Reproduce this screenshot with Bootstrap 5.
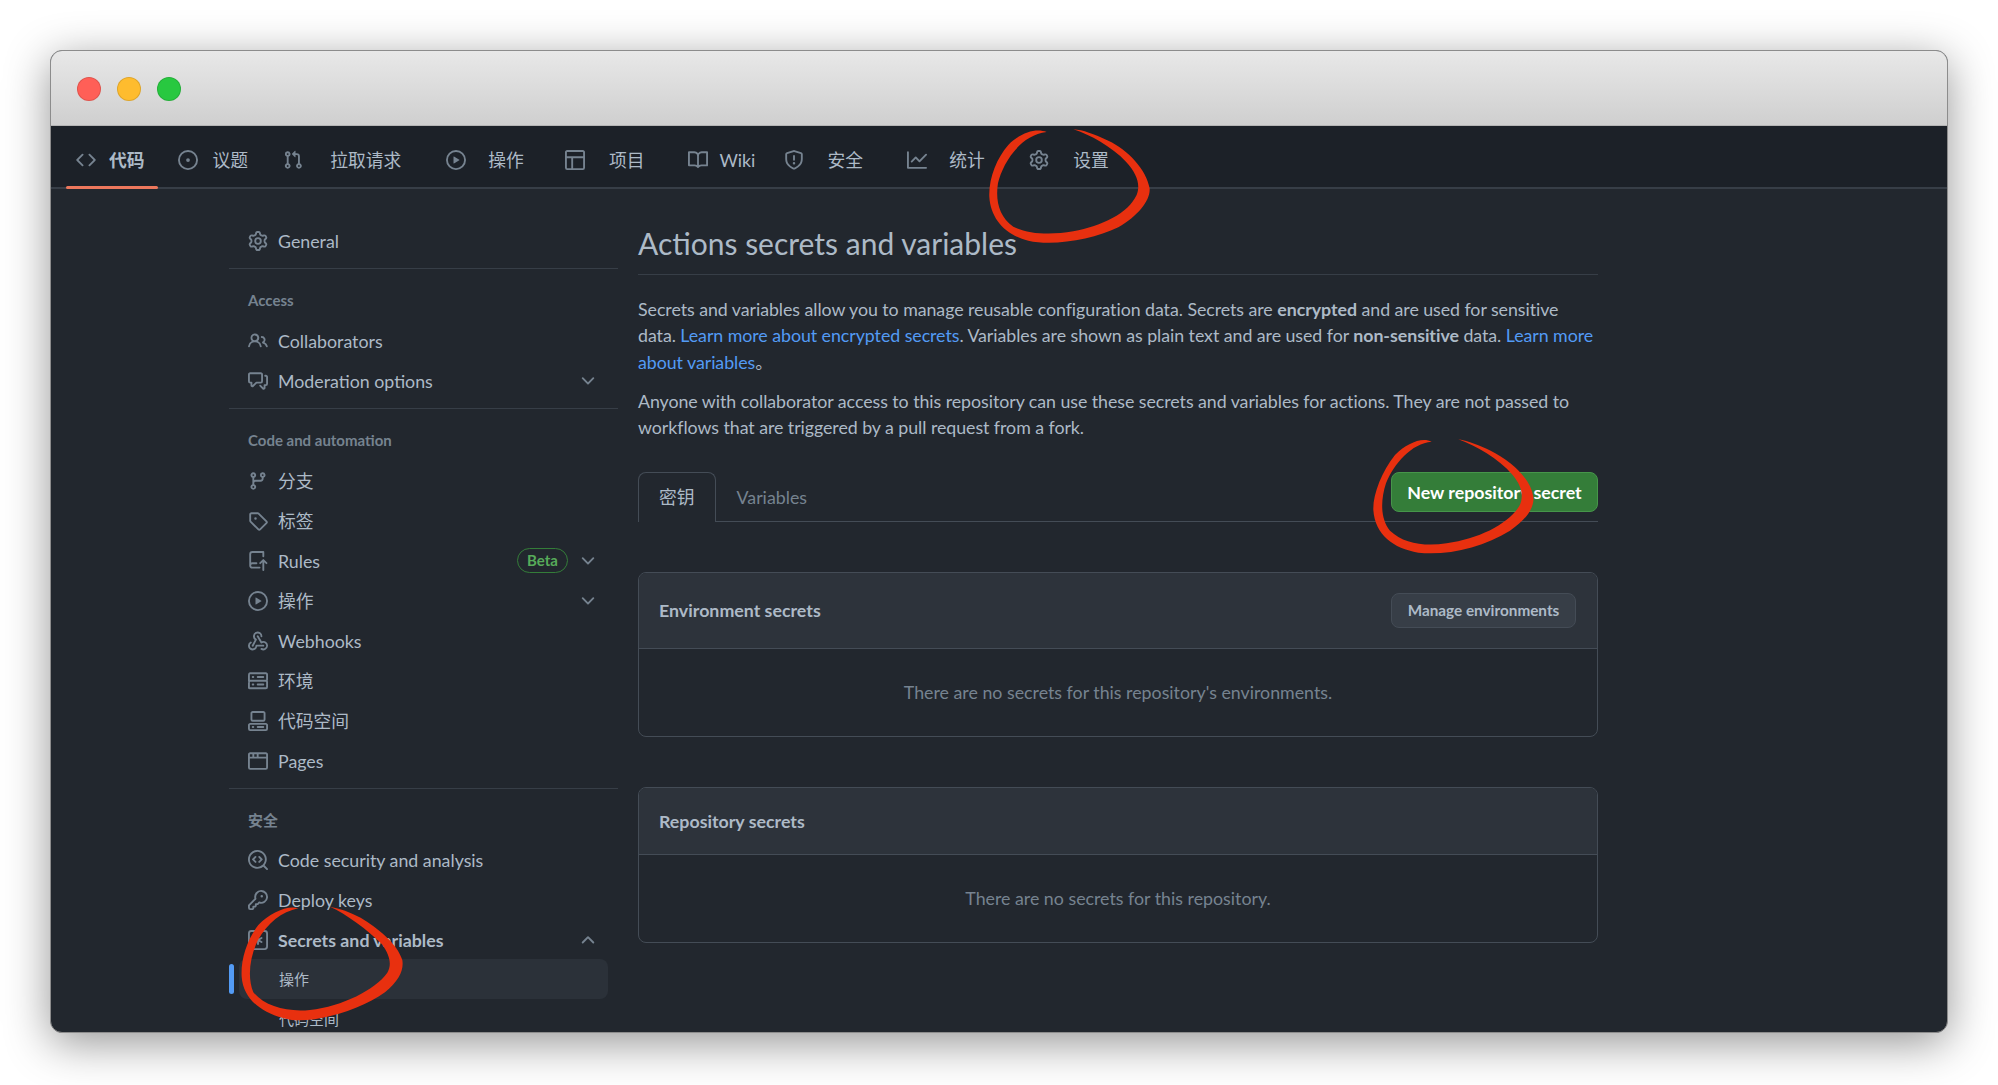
<!DOCTYPE html>
<html lang="en">

<head>
    <meta charset="UTF-8">
    <title>Actions secrets and variables</title>
    <link href="https://cdn.jsdelivr.net/npm/bootstrap@5.3.3/dist/css/bootstrap.min.css" rel="stylesheet">
    <style>
        html, body {
            height: 100%;
            overflow: hidden;
        }

        body {
            background-color: #fff;
            color: #adbac7;
            font-family: Lato, "Noto Sans CJK SC", sans-serif;
            font-size: 17.8px;
            line-height: 26.5px;
        }

        .page-wrap {
            position: relative;
            width: 1998px;
            height: 1085px;
            padding: 50px 50px 52px;
        }

        .app-window {
            height: 983px;
            background-color: #22272e;
            border: 1px solid #8c8c8c;
            border-radius: 12px;
            box-shadow: 0 10px 45px rgba(0, 0, 0, .42);
            overflow: hidden;
        }

        .title-bar {
            height: 76px;
            padding-left: 26px;
            padding-top: 2px;
            background: linear-gradient(#e8e8e8, #cfcfcf);
            border-bottom: 1px solid #b5b5b5;
        }

        .light-dot {
            width: 24px;
            height: 24px;
            border: 1px solid rgba(0, 0, 0, .12);
        }

        .light-red { background-color: #ff5f57; }
        .light-yellow { background-color: #febc2e; }
        .light-green { background-color: #28c840; }

        .octicon {
            width: 20px;
            height: 20px;
            flex: none;
            fill: #768390;
        }

        .repo-tabs {
            height: 63px;
            padding-left: 25px;
            background-color: #1c2128;
            border-bottom: 2px solid #373e47;
            flex-wrap: nowrap;
        }

        .repo-tabs .nav-link {
            position: relative;
            display: flex;
            align-items: center;
            padding: 7.5px 0 0;
            color: #adbac7;
            white-space: nowrap;
        }

        .repo-tabs .nav-link.active {
            font-weight: 700;
        }

        .repo-tabs .nav-link.active::after {
            content: "";
            position: absolute;
            left: -10px;
            right: -13px;
            bottom: -2px;
            height: 3px;
            background-color: #ec775c;
            border-radius: 2px;
        }

        /* the translated labels leave uneven gaps, so each tab keeps its own */
        .repo-tabs .nav-link:nth-child(1) { margin-right: 33px; }
        .repo-tabs .nav-link:nth-child(2) { margin-right: 35px; }
        .repo-tabs .nav-link:nth-child(3) { margin-right: 44.5px; }
        .repo-tabs .nav-link:nth-child(4) { margin-right: 41px; }
        .repo-tabs .nav-link:nth-child(5) { margin-right: 44px; }
        .repo-tabs .nav-link:nth-child(6) { margin-right: 28.7px; }
        .repo-tabs .nav-link:nth-child(7) { margin-right: 44.3px; }
        .repo-tabs .nav-link:nth-child(8) { margin-right: 44.3px; }
        .repo-tabs .nav-link:nth-child(1) svg { margin-right: 13px; }
        .repo-tabs .nav-link:nth-child(2) svg { margin-right: 15px; }
        .repo-tabs .nav-link:nth-child(3) svg { margin-right: 27px; }
        .repo-tabs .nav-link:nth-child(4) svg { margin-right: 22.5px; }
        .repo-tabs .nav-link:nth-child(5) svg { margin-right: 24px; }
        .repo-tabs .nav-link:nth-child(6) svg { margin-right: 11px; }
        .repo-tabs .nav-link:nth-child(7) svg { margin-right: 23.5px; }
        .repo-tabs .nav-link:nth-child(8) svg { margin-right: 21.7px; }
        .repo-tabs .nav-link:nth-child(9) svg { margin-right: 24.2px; }

        .content-area {
            padding-left: 178px;
            gap: 20px;
        }

        .side-menu {
            width: 389px;
            padding-top: 32px;
            flex: none;
        }

        .side-row {
            display: flex;
            align-items: center;
            gap: 10px;
            height: 40px;
            padding: 0 20px 0 19px;
            color: #adbac7;
        }

        .side-row .chev {
            margin-left: auto;
        }

        .side-row .beta-pill + .chev {
            margin-left: 0;
        }

        .side-group {
            padding-bottom: 7.5px;
            border-bottom: 1px solid #373e47;
        }

        .side-head {
            padding: 21px 19px 10.5px;
            font-size: 15px;
            line-height: 20px;
            font-weight: 700;
            color: #768390;
        }

        .side-head.last-head {
            padding-bottom: 10px;
        }

        .beta-pill {
            margin-left: auto;
            width: 51px;
            height: 25px;
            line-height: 23px;
            text-align: center;
            font-size: 15px;
            font-weight: 700;
            color: #57ab5a;
            border: 1px solid #347d39;
        }

        .side-sub {
            position: relative;
            display: flex;
            align-items: center;
            height: 40px;
            margin: 0 10px;
            padding-left: 40px;
            font-size: 15px;
            border-radius: 8px;
        }

        .side-sub.current {
            margin-top: -1px;
            background-color: #2b3139;
        }

        .side-sub.current::before {
            content: "";
            position: absolute;
            left: -10px;
            top: 5px;
            width: 5px;
            height: 30px;
            background-color: #539bf5;
            border-radius: 3px;
        }

        .main-col {
            width: 960px;
            padding-top: 35px;
            flex: none;
        }

        .page-title {
            height: 51px;
            margin-bottom: 21px;
            font-size: 30px;
            line-height: 38px;
            font-weight: 400;
            color: #adbac7;
            border-bottom: 1px solid #373e47;
        }

        .main-col p {
            margin-bottom: 12.5px;
            letter-spacing: -.05px;
        }

        .main-col a {
            color: #539bf5;
            text-decoration: none;
        }

        .main-col strong {
            font-weight: 700;
        }

        .secret-tabs {
            height: 50px;
            margin-top: 31px;
            margin-bottom: 50px;
            border-bottom: 1px solid #444c56;
        }

        .secret-tabs .nav-tabs {
            border: 0;
        }

        .secret-tabs .nav-link {
            height: 50px;
            padding: 11px 20px;
            color: #768390;
            background: transparent;
            border: 1px solid transparent;
            border-bottom: 0;
            border-radius: 8px 8px 0 0;
        }

        .secret-tabs .nav-link.active {
            color: #adbac7;
            background-color: #22272e;
            border-color: #444c56;
        }

        .btn-new-secret {
            width: 207px;
            height: 40px;
            padding: 0;
            font-size: 17.8px;
            font-weight: 700;
            color: #fff;
            background-color: #347d39;
            border: 1px solid #46954a;
            border-radius: 8px;
        }

        .empty-box {
            --bs-card-bg: #22272e;
            --bs-card-border-color: #444c56;
            --bs-card-border-radius: 8px;
            --bs-card-inner-border-radius: 7px;
            --bs-card-cap-bg: #2d333b;
            color: #adbac7;
            margin-bottom: 50px;
        }

        .empty-box .card-header {
            padding: 0 21px 0 20px;
            font-weight: 700;
            border-bottom-color: #444c56;
        }

        .empty-box .head-tall { height: 76px; }
        .empty-box .head-short { height: 67px; }

        .empty-box .card-body {
            height: 87px;
            padding: 0;
            color: #768390;
        }

        .btn-manage {
            width: 185px;
            height: 35px;
            padding: 0;
            font-size: 15.3px;
            font-weight: 700;
            color: #adbac7;
            background-color: #373e47;
            border: 1px solid #444c56;
            border-radius: 8px;
        }

        .ink-layer {
            position: absolute;
            left: 0;
            top: 0;
            width: 1998px;
            height: 1085px;
            pointer-events: none;
        }
    </style>
</head>

<body>
    <svg width="0" height="0" class="position-absolute">
        <symbol id="i-code" viewBox="0 0 16 16"><path d="m11.28 3.22 4.25 4.25a.75.75 0 0 1 0 1.06l-4.25 4.25a.749.749 0 0 1-1.275-.326.749.749 0 0 1 .215-.734L13.94 8l-3.72-3.72a.749.749 0 0 1 .326-1.275.749.749 0 0 1 .734.215Zm-6.56 0a.751.751 0 0 1 1.042.018.751.751 0 0 1 .018 1.042L2.06 8l3.72 3.72a.749.749 0 0 1-.326 1.275.749.749 0 0 1-.734-.215L.47 8.53a.75.75 0 0 1 0-1.06Z"/></symbol>
        <symbol id="i-issue" viewBox="0 0 16 16"><path d="M8 9.5a1.5 1.5 0 1 0 0-3 1.5 1.5 0 0 0 0 3Z"/><path d="M8 0a8 8 0 1 1 0 16A8 8 0 0 1 8 0ZM1.5 8a6.5 6.5 0 1 0 13 0 6.5 6.5 0 0 0-13 0Z"/></symbol>
        <symbol id="i-pull" viewBox="0 0 16 16"><path d="M1.5 3.25a2.25 2.25 0 1 1 3 2.122v5.256a2.251 2.251 0 1 1-1.5 0V5.372A2.25 2.25 0 0 1 1.5 3.25Zm5.677-.177L9.573.677A.25.25 0 0 1 10 .854V2.5h1A2.5 2.5 0 0 1 13.5 5v5.628a2.251 2.251 0 1 1-1.5 0V5a1 1 0 0 0-1-1h-1v1.646a.25.25 0 0 1-.427.177L7.177 3.427a.25.25 0 0 1 0-.354ZM3.75 2.5a.75.75 0 1 0 0 1.5.75.75 0 0 0 0-1.5Zm0 9.5a.75.75 0 1 0 0 1.5.75.75 0 0 0 0-1.5Zm8.25.75a.75.75 0 1 0 1.5 0 .75.75 0 0 0-1.5 0Z"/></symbol>
        <symbol id="i-play" viewBox="0 0 16 16"><path d="M8 0a8 8 0 1 1 0 16A8 8 0 0 1 8 0ZM1.5 8a6.5 6.5 0 1 0 13 0 6.5 6.5 0 0 0-13 0Zm4.879-2.773 4.264 2.559a.25.25 0 0 1 0 .428l-4.264 2.559A.25.25 0 0 1 6 10.559V5.442a.25.25 0 0 1 .379-.215Z"/></symbol>
        <symbol id="i-table" viewBox="0 0 16 16"><path d="M0 1.75C0 .784.784 0 1.75 0h12.5C15.216 0 16 .784 16 1.75v12.5A1.75 1.75 0 0 1 14.25 16H1.75A1.75 1.75 0 0 1 0 14.25ZM6.5 6.5v8h7.75a.25.25 0 0 0 .25-.25V6.5Zm8-1.5V1.75a.25.25 0 0 0-.25-.25H1.75a.25.25 0 0 0-.25.25V5Zm-13 1.5v7.75c0 .138.112.25.25.25H5v-8Z"/></symbol>
        <symbol id="i-book" viewBox="0 0 16 16"><path d="M0 1.75A.75.75 0 0 1 .75 1h4.253c1.227 0 2.317.59 3 1.501A3.743 3.743 0 0 1 11.006 1h4.245a.75.75 0 0 1 .75.75v10.5a.75.75 0 0 1-.75.75h-4.507a2.25 2.25 0 0 0-1.591.659l-.622.621a.75.75 0 0 1-1.06 0l-.622-.621A2.25 2.25 0 0 0 5.258 13H.75a.75.75 0 0 1-.75-.75Zm7.251 10.324.004-5.073-.002-2.253A2.25 2.25 0 0 0 5.003 2.5H1.5v9h3.757a3.75 3.75 0 0 1 1.994.574ZM8.755 4.75l-.004 7.322a3.752 3.752 0 0 1 1.992-.572H14.5v-9h-3.495a2.25 2.25 0 0 0-2.25 2.25Z"/></symbol>
        <symbol id="i-shield" viewBox="0 0 16 16"><path d="M7.467.133a1.748 1.748 0 0 1 1.066 0l5.25 1.68A1.75 1.75 0 0 1 15 3.48V7c0 1.566-.32 3.182-1.303 4.682-.983 1.498-2.585 2.813-5.032 3.855a1.697 1.697 0 0 1-1.33 0c-2.447-1.042-4.049-2.357-5.032-3.855C1.32 10.182 1 8.566 1 7V3.48a1.75 1.75 0 0 1 1.217-1.667Zm.61 1.429a.25.25 0 0 0-.153 0l-5.25 1.68a.25.25 0 0 0-.174.238V7c0 1.358.275 2.666 1.057 3.86.784 1.194 2.121 2.34 4.366 3.297a.196.196 0 0 0 .154 0c2.245-.956 3.582-2.104 4.366-3.298C13.225 9.666 13.5 8.36 13.5 7V3.48a.251.251 0 0 0-.174-.237l-5.25-1.68ZM8.75 4.75v3a.75.75 0 0 1-1.5 0v-3a.75.75 0 0 1 1.5 0ZM9 10.5a1 1 0 1 1-2 0 1 1 0 0 1 2 0Z"/></symbol>
        <symbol id="i-graph" viewBox="0 0 16 16"><path d="M1.5 1.75V13.5h13.75a.75.75 0 0 1 0 1.5H.75a.75.75 0 0 1-.75-.75V1.75a.75.75 0 0 1 1.5 0Zm14.28 2.53-5.25 5.25a.75.75 0 0 1-1.06 0L7 7.06 4.28 9.78a.751.751 0 0 1-1.042-.018.751.751 0 0 1-.018-1.042l3.25-3.25a.75.75 0 0 1 1.06 0L10 7.94l4.72-4.72a.751.751 0 0 1 1.042.018.751.751 0 0 1 .018 1.042Z"/></symbol>
        <symbol id="i-gear" viewBox="0 0 16 16"><path d="M8 0a8.2 8.2 0 0 1 .701.031C9.444.095 9.99.645 10.16 1.29l.288 1.107c.018.066.079.158.212.224.231.114.454.243.668.386.123.082.233.09.299.071l1.103-.303c.644-.176 1.392.021 1.82.63.27.385.506.792.704 1.218.315.675.111 1.422-.364 1.891l-.814.806c-.049.048-.098.147-.088.294.016.257.016.515 0 .772-.01.147.038.246.088.294l.814.806c.475.469.679 1.216.364 1.891a7.977 7.977 0 0 1-.704 1.217c-.428.61-1.176.807-1.82.63l-1.102-.302c-.067-.019-.177-.011-.3.071a5.909 5.909 0 0 1-.668.386c-.133.066-.194.158-.211.224l-.29 1.106c-.168.646-.715 1.196-1.458 1.26a8.006 8.006 0 0 1-1.402 0c-.743-.064-1.289-.614-1.458-1.26l-.289-1.106c-.018-.066-.079-.158-.212-.224a5.738 5.738 0 0 1-.668-.386c-.123-.082-.233-.09-.299-.071l-1.103.303c-.644.176-1.392-.021-1.82-.63a8.12 8.12 0 0 1-.704-1.218c-.315-.675-.111-1.422.363-1.891l.815-.806c.05-.048.098-.147.088-.294a6.214 6.214 0 0 1 0-.772c.01-.147-.038-.246-.088-.294l-.815-.806C.635 6.045.431 5.298.746 4.623a7.92 7.92 0 0 1 .704-1.217c.428-.61 1.176-.807 1.82-.63l1.102.302c.067.019.177.011.3-.071.214-.143.437-.272.668-.386.133-.066.194-.158.211-.224l.29-1.106C6.009.645 6.556.095 7.299.03 7.53.01 7.764 0 8 0Zm-.571 1.525c-.036.003-.108.036-.137.146l-.289 1.105c-.147.561-.549.967-.998 1.189-.173.086-.34.183-.5.29-.417.278-.97.423-1.529.27l-1.103-.303c-.109-.03-.175.016-.195.045-.22.312-.412.644-.573.99-.014.031-.021.11.059.19l.815.806c.411.406.562.957.53 1.456a4.709 4.709 0 0 0 0 .582c.032.499-.119 1.05-.53 1.456l-.815.806c-.081.08-.073.159-.059.19.162.346.353.677.573.989.02.03.085.076.195.046l1.102-.303c.56-.153 1.113-.008 1.53.27.161.107.328.204.501.29.447.222.85.629.997 1.189l.289 1.105c.029.109.101.143.137.146a6.6 6.6 0 0 0 1.142 0c.036-.003.108-.036.137-.146l.289-1.105c.147-.561.549-.967.998-1.189.173-.086.34-.183.5-.29.417-.278.97-.423 1.529-.27l1.103.303c.109.029.175-.016.195-.045.22-.313.411-.644.573-.99.014-.031.021-.11-.059-.19l-.815-.806c-.411-.406-.562-.957-.53-1.456a4.709 4.709 0 0 0 0-.582c-.032-.499.119-1.05.53-1.456l.815-.806c.081-.08.073-.159.059-.19a6.464 6.464 0 0 0-.573-.989c-.02-.03-.085-.076-.195-.046l-1.102.303c-.56.153-1.113.008-1.53-.27a4.44 4.44 0 0 0-.501-.29c-.447-.222-.85-.629-.997-1.189l-.289-1.105c-.029-.11-.101-.143-.137-.146a6.6 6.6 0 0 0-1.142 0ZM11 8a3 3 0 1 1-6 0 3 3 0 0 1 6 0ZM9.5 8a1.5 1.5 0 1 0-3.001.001A1.5 1.5 0 0 0 9.5 8Z"/></symbol>
        <symbol id="i-people" viewBox="0 0 16 16"><path d="M2 5.5a3.5 3.5 0 1 1 5.898 2.549 5.508 5.508 0 0 1 3.034 4.084.75.75 0 1 1-1.482.235 4 4 0 0 0-7.9 0 .75.75 0 0 1-1.482-.236A5.507 5.507 0 0 1 3.102 8.05 3.493 3.493 0 0 1 2 5.5ZM11 4a3.001 3.001 0 0 1 2.22 5.018 5.01 5.01 0 0 1 2.56 3.012.749.749 0 0 1-.885.954.752.752 0 0 1-.549-.514 3.507 3.507 0 0 0-2.522-2.372.75.75 0 0 1-.574-.73v-.352a.75.75 0 0 1 .416-.672A1.5 1.5 0 0 0 11 5.5.75.75 0 0 1 11 4Zm-5.5-.5a2 2 0 1 0-.001 3.999A2 2 0 0 0 5.5 3.5Z"/></symbol>
        <symbol id="i-discuss" viewBox="0 0 16 16"><path d="M1.75 1h8.5c.966 0 1.75.784 1.75 1.75v5.5A1.75 1.75 0 0 1 10.25 10H7.061l-2.574 2.573A1.458 1.458 0 0 1 2 11.543V10h-.25A1.75 1.75 0 0 1 0 8.25v-5.5C0 1.784.784 1 1.75 1ZM1.5 2.75v5.5c0 .138.112.25.25.25h1a.75.75 0 0 1 .75.75v2.19l2.72-2.72a.749.749 0 0 1 .53-.22h3.5a.25.25 0 0 0 .25-.25v-5.5a.25.25 0 0 0-.25-.25h-8.5a.25.25 0 0 0-.25.25Zm13 2a.25.25 0 0 0-.25-.25h-.5a.75.75 0 0 1 0-1.5h.5c.966 0 1.75.784 1.75 1.75v5.5A1.75 1.75 0 0 1 14.25 12H14v1.543a1.458 1.458 0 0 1-2.487 1.03L9.22 12.28a.749.749 0 0 1 .326-1.275.749.749 0 0 1 .734.215l2.22 2.22v-2.19a.75.75 0 0 1 .75-.75h1a.25.25 0 0 0 .25-.25Z"/></symbol>
        <symbol id="i-branch" viewBox="0 0 16 16"><path d="M9.5 3.25a2.25 2.25 0 1 1 3 2.122V6A2.5 2.5 0 0 1 10 8.5H6a1 1 0 0 0-1 1v1.128a2.251 2.251 0 1 1-1.5 0V5.372a2.25 2.25 0 1 1 1.5 0v1.836A2.493 2.493 0 0 1 6 7h4a1 1 0 0 0 1-1v-.628A2.25 2.25 0 0 1 9.5 3.25Zm-6 0a.75.75 0 1 0 1.5 0 .75.75 0 0 0-1.5 0Zm8.25-.75a.75.75 0 1 0 0 1.5.75.75 0 0 0 0-1.5ZM4.25 12a.75.75 0 1 0 0 1.5.75.75 0 0 0 0-1.5Z"/></symbol>
        <symbol id="i-tag" viewBox="0 0 16 16"><path d="M1 7.775V2.75C1 1.784 1.784 1 2.75 1h5.025c.464 0 .91.184 1.238.513l6.25 6.25a1.75 1.75 0 0 1 0 2.474l-5.026 5.026a1.75 1.75 0 0 1-2.474 0l-6.25-6.25A1.752 1.752 0 0 1 1 7.775Zm1.5 0c0 .066.026.13.073.177l6.25 6.25a.25.25 0 0 0 .354 0l5.025-5.025a.25.25 0 0 0 0-.354l-6.25-6.25a.25.25 0 0 0-.177-.073H2.75a.25.25 0 0 0-.25.25ZM6 5a1 1 0 1 1 0 2 1 1 0 0 1 0-2Z"/></symbol>
        <symbol id="i-rules" viewBox="0 0 16 16"><path d="M1 2.5A2.5 2.5 0 0 1 3.5 0h8.75a.75.75 0 0 1 .75.75v3.5a.75.75 0 0 1-1.5 0V1.5h-8a1 1 0 0 0-1 1v6.708A2.493 2.493 0 0 1 3.5 9h3.25a.75.75 0 0 1 0 1.5H3.5a1 1 0 0 0 0 2h5.75a.75.75 0 0 1 0 1.5H3.5A2.5 2.5 0 0 1 1 11.5Zm13.23 7.79h-.001l-1.224-1.224v6.184a.75.75 0 0 1-1.5 0V9.066L10.28 10.29a.75.75 0 0 1-1.06-1.061l2.505-2.504a.75.75 0 0 1 1.06 0L15.29 9.23a.751.751 0 0 1-.018 1.042.751.751 0 0 1-1.042.018Z"/></symbol>
        <symbol id="i-webhook" viewBox="0 0 16 16"><path d="M5.5 4.25a2.25 2.25 0 0 1 4.5 0 .75.75 0 0 0 1.5 0 3.75 3.75 0 1 0-6.14 2.889l-2.272 4.258a.75.75 0 0 0 1.324.706L7 7.25a.75.75 0 0 0-.309-1.015A2.25 2.25 0 0 1 5.5 4.25Z"/><path d="M7.364 3.607a.75.75 0 0 1 1.03.257l2.608 4.349a3.75 3.75 0 1 1-.628 6.785.75.75 0 0 1 .752-1.299 2.25 2.25 0 1 0-.033-3.88.75.75 0 0 1-1.03-.256L7.107 4.636a.75.75 0 0 1 .257-1.03Z"/><path d="M2.9 8.776A.75.75 0 0 1 2.625 9.8 2.25 2.25 0 1 0 6 11.75a.75.75 0 0 1 .75-.751h5.5a.75.75 0 0 1 0 1.5H7.425a3.751 3.751 0 1 1-5.55-3.998.75.75 0 0 1 1.024.274Z"/></symbol>
        <symbol id="i-server" viewBox="0 0 16 16"><path d="M1.75 1h12.5c.966 0 1.75.784 1.75 1.75v4c0 .372-.116.717-.314 1 .198.283.314.628.314 1v4a1.75 1.75 0 0 1-1.75 1.75H1.75A1.75 1.75 0 0 1 0 13.75v-4c0-.372.116-.717.314-1a1.739 1.739 0 0 1-.314-1v-4C0 1.784.784 1 1.75 1ZM1.5 2.75v4c0 .138.112.25.25.25h12.5a.25.25 0 0 0 .25-.25v-4a.25.25 0 0 0-.25-.25H1.75a.25.25 0 0 0-.25.25Zm.25 5.75a.25.25 0 0 0-.25.25v4c0 .138.112.25.25.25h12.5a.25.25 0 0 0 .25-.25v-4a.25.25 0 0 0-.25-.25ZM7 4.75A.75.75 0 0 1 7.75 4h4.5a.75.75 0 0 1 0 1.5h-4.5A.75.75 0 0 1 7 4.75ZM7.75 10h4.5a.75.75 0 0 1 0 1.5h-4.5a.75.75 0 0 1 0-1.5ZM3 4.75A.75.75 0 0 1 3.75 4h.5a.75.75 0 0 1 0 1.5h-.5A.75.75 0 0 1 3 4.75ZM3.75 10h.5a.75.75 0 0 1 0 1.5h-.5a.75.75 0 0 1 0-1.5Z"/></symbol>
        <symbol id="i-codespaces" viewBox="0 0 16 16"><path d="M0 11.25c0-.966.784-1.75 1.75-1.75h12.5c.966 0 1.75.784 1.75 1.75v3A1.75 1.75 0 0 1 14.25 16H1.75A1.75 1.75 0 0 1 0 14.25Zm2-9.5C2 .784 2.784 0 3.75 0h8.5C13.216 0 14 .784 14 1.75v5a1.75 1.75 0 0 1-1.75 1.75h-8.5A1.75 1.75 0 0 1 2 6.75Zm1.75-.25a.25.25 0 0 0-.25.25v5c0 .138.112.25.25.25h8.5a.25.25 0 0 0 .25-.25v-5a.25.25 0 0 0-.25-.25Zm-2 9.5a.25.25 0 0 0-.25.25v3c0 .138.112.25.25.25h12.5a.25.25 0 0 0 .25-.25v-3a.25.25 0 0 0-.25-.25Z"/><path d="M7 12.75a.75.75 0 0 1 .75-.75h4.5a.75.75 0 0 1 0 1.5h-4.5a.75.75 0 0 1-.75-.75Zm-4 0a.75.75 0 0 1 .75-.75h.5a.75.75 0 0 1 0 1.5h-.5a.75.75 0 0 1-.75-.75Z"/></symbol>
        <symbol id="i-browser" viewBox="0 0 16 16"><path d="M0 2.75C0 1.784.784 1 1.75 1h12.5c.966 0 1.75.784 1.75 1.75v10.5A1.75 1.75 0 0 1 14.25 15H1.75A1.75 1.75 0 0 1 0 13.25ZM14.5 6h-13v7.25c0 .138.112.25.25.25h12.5a.25.25 0 0 0 .25-.25Zm-6-3.5v2h6V2.75a.25.25 0 0 0-.25-.25ZM5 2.5v2h2v-2Zm-3.25 0a.25.25 0 0 0-.25.25V4.5h2v-2Z"/></symbol>
        <symbol id="i-codescan" viewBox="0 0 16 16"><path d="M8.47 4.97a.75.75 0 0 0 0 1.06L9.94 7.5 8.47 8.97a.75.75 0 1 0 1.06 1.06l2-2a.75.75 0 0 0 0-1.06l-2-2a.75.75 0 0 0-1.06 0ZM6.53 6.03a.75.75 0 0 0-1.06-1.06l-2 2a.75.75 0 0 0 0 1.06l2 2a.75.75 0 1 0 1.06-1.06L5.06 7.5l1.47-1.47Z"/><path d="M12.246 13.307a7.501 7.501 0 1 1 1.06-1.06l2.474 2.473a.749.749 0 0 1-.326 1.275.749.749 0 0 1-.734-.215ZM1.5 7.5a6.002 6.002 0 0 0 3.608 5.504 6.002 6.002 0 0 0 6.486-1.117.748.748 0 0 1 .292-.293A6 6 0 1 0 1.5 7.5Z"/></symbol>
        <symbol id="i-key" viewBox="0 0 16 16"><path d="M10.5 0a5.499 5.499 0 1 1-1.288 10.848l-.932.932a.749.749 0 0 1-.53.22H7v.75a.749.749 0 0 1-.22.53l-.5.5a.749.749 0 0 1-.53.22H5v.75a.749.749 0 0 1-.22.53l-.5.5a.749.749 0 0 1-.53.22h-2A1.75 1.75 0 0 1 0 14.25v-2c0-.199.079-.389.22-.53l4.932-4.932A5.5 5.5 0 0 1 10.5 0Zm-4 5.5c-.001.431.069.86.205 1.269a.75.75 0 0 1-.181.768L1.5 12.56v1.69c0 .138.112.25.25.25h1.69l.06-.06v-1.19a.75.75 0 0 1 .75-.75h1.19l.06-.06v-1.19a.75.75 0 0 1 .75-.75h1.19l1.023-1.025a.75.75 0 0 1 .768-.18A4 4 0 1 0 6.5 5.5ZM11 6a1 1 0 1 1 0-2 1 1 0 0 1 0 2Z"/></symbol>
        <symbol id="i-asterisk" viewBox="0 0 16 16"><path d="M0 2.75A2.75 2.75 0 0 1 2.75 0h10.5A2.75 2.75 0 0 1 16 2.75v10.5A2.75 2.75 0 0 1 13.25 16H2.75A2.75 2.75 0 0 1 0 13.25ZM2.75 1.5c-.69 0-1.25.56-1.25 1.25v10.5c0 .69.56 1.25 1.25 1.25h10.5c.69 0 1.25-.56 1.25-1.25V2.75c0-.69-.56-1.25-1.25-1.25Z"/><path d="M8 4a.75.75 0 0 1 .75.75V6.7l1.69-.975a.75.75 0 0 1 .75 1.3L9.5 8l1.69.976a.75.75 0 0 1-.75 1.298L8.75 9.3v1.951a.75.75 0 0 1-1.5 0V9.299l-1.69.976a.75.75 0 0 1-.75-1.3L6.5 8l-1.69-.975a.75.75 0 0 1 .75-1.3l1.69.976V4.75A.75.75 0 0 1 8 4Z"/></symbol>
        <symbol id="i-down" viewBox="0 0 16 16"><path d="M12.78 5.22a.749.749 0 0 1 0 1.06l-4.25 4.25a.749.749 0 0 1-1.06 0L3.22 6.28a.749.749 0 1 1 1.06-1.06L8 8.939l3.72-3.719a.749.749 0 0 1 1.06 0Z"/></symbol>
        <symbol id="i-up" viewBox="0 0 16 16"><path d="M3.22 10.53a.749.749 0 0 1 0-1.06l4.25-4.25a.749.749 0 0 1 1.06 0l4.25 4.25a.749.749 0 1 1-1.06 1.06L8 6.811 4.28 10.53a.749.749 0 0 1-1.06 0Z"/></symbol>
    </svg>

    <div class="page-wrap">
        <div class="app-window d-flex flex-column">
            <div class="title-bar d-flex align-items-center gap-3">
                <span class="light-dot light-red rounded-circle"></span>
                <span class="light-dot light-yellow rounded-circle"></span>
                <span class="light-dot light-green rounded-circle"></span>
            </div>

            <nav class="nav repo-tabs align-items-stretch">
                <a class="nav-link active" href="#"><svg class="octicon"><use href="#i-code"/></svg>代码</a>
                <a class="nav-link" href="#"><svg class="octicon"><use href="#i-issue"/></svg>议题</a>
                <a class="nav-link" href="#"><svg class="octicon"><use href="#i-pull"/></svg>拉取请求</a>
                <a class="nav-link" href="#"><svg class="octicon"><use href="#i-play"/></svg>操作</a>
                <a class="nav-link" href="#"><svg class="octicon"><use href="#i-table"/></svg>项目</a>
                <a class="nav-link" href="#"><svg class="octicon"><use href="#i-book"/></svg>Wiki</a>
                <a class="nav-link" href="#"><svg class="octicon"><use href="#i-shield"/></svg>安全</a>
                <a class="nav-link" href="#"><svg class="octicon"><use href="#i-graph"/></svg>统计</a>
                <a class="nav-link" href="#"><svg class="octicon"><use href="#i-gear"/></svg>设置</a>
            </nav>

            <div class="content-area d-flex flex-grow-1 overflow-hidden">
                <aside class="side-menu">
                    <div class="side-group">
                        <div class="side-row"><svg class="octicon"><use href="#i-gear"/></svg>General</div>
                    </div>
                    <div class="side-group">
                        <div class="side-head">Access</div>
                        <div class="side-row"><svg class="octicon"><use href="#i-people"/></svg>Collaborators</div>
                        <div class="side-row"><svg class="octicon"><use href="#i-discuss"/></svg>Moderation options<svg class="octicon chev"><use href="#i-down"/></svg></div>
                    </div>
                    <div class="side-group">
                        <div class="side-head">Code and automation</div>
                        <div class="side-row"><svg class="octicon"><use href="#i-branch"/></svg>分支</div>
                        <div class="side-row"><svg class="octicon"><use href="#i-tag"/></svg>标签</div>
                        <div class="side-row"><svg class="octicon"><use href="#i-rules"/></svg>Rules<span class="beta-pill rounded-pill">Beta</span><svg class="octicon chev"><use href="#i-down"/></svg></div>
                        <div class="side-row"><svg class="octicon"><use href="#i-play"/></svg>操作<svg class="octicon chev"><use href="#i-down"/></svg></div>
                        <div class="side-row"><svg class="octicon"><use href="#i-webhook"/></svg>Webhooks</div>
                        <div class="side-row"><svg class="octicon"><use href="#i-server"/></svg>环境</div>
                        <div class="side-row"><svg class="octicon"><use href="#i-codespaces"/></svg>代码空间</div>
                        <div class="side-row"><svg class="octicon"><use href="#i-browser"/></svg>Pages</div>
                    </div>
                    <div class="side-head last-head">安全</div>
                    <div class="side-row"><svg class="octicon"><use href="#i-codescan"/></svg>Code security and analysis</div>
                    <div class="side-row"><svg class="octicon"><use href="#i-key"/></svg>Deploy keys</div>
                    <div class="side-row fw-bold"><svg class="octicon"><use href="#i-asterisk"/></svg>Secrets and variables<svg class="octicon chev"><use href="#i-up"/></svg></div>
                    <div class="side-sub current">操作</div>
                    <div class="side-sub">代码空间</div>
                </aside>

                <main class="main-col">
                    <h2 class="page-title">Actions secrets and variables</h2>
                    <p>Secrets and variables allow you to manage reusable configuration data. Secrets are <strong>encrypted</strong> and are used for sensitive<br>data. <a href="#">Learn more about encrypted secrets</a>. Variables are shown as plain text and are used for <strong>non-sensitive</strong> data. <a href="#">Learn more<br>about variables</a>。</p>
                    <p>Anyone with collaborator access to this repository can use these secrets and variables for actions. They are not passed to<br>workflows that are triggered by a pull request from a fork.</p>

                    <div class="secret-tabs d-flex justify-content-between">
                        <ul class="nav nav-tabs">
                            <li class="nav-item"><a class="nav-link active" href="#">密钥</a></li>
                            <li class="nav-item"><a class="nav-link" href="#">Variables</a></li>
                        </ul>
                        <button class="btn btn-new-secret">New repository secret</button>
                    </div>

                    <div class="card empty-box">
                        <div class="card-header head-tall d-flex justify-content-between align-items-center">
                            <span>Environment secrets</span>
                            <button class="btn btn-manage">Manage environments</button>
                        </div>
                        <div class="card-body d-flex align-items-center justify-content-center">There are no secrets for this repository's environments.</div>
                    </div>

                    <div class="card empty-box">
                        <div class="card-header head-short d-flex align-items-center">Repository secrets</div>
                        <div class="card-body d-flex align-items-center justify-content-center">There are no secrets for this repository.</div>
                    </div>
                </main>
            </div>
        </div>

        <svg class="ink-layer" viewBox="0 0 1998 1085" fill="#e8300f">
            <g transform="translate(700 100) scale(.3333)">
                <path d="M1040 96C1010 84 965 95 925 135C890 175 866 235 868 290C872 355 915 405 985 422C1060 440 1180 418 1255 382C1315 347 1352 300 1349 265C1340 210 1285 150 1225 122C1180 102 1150 90 1120 88C1170 104 1235 140 1278 185C1312 222 1322 255 1310 285C1285 340 1205 378 1120 394C1050 406 985 402 940 380C897 350 886 300 894 250C908 190 960 105 1040 96Z"/>
            </g>
            <g transform="translate(1340 420) scale(.3333)">
                <path d="M275 65C245 50 200 70 165 105C125 155 98 225 100 270C105 345 160 385 235 398C320 408 430 382 510 332C562 297 584 260 580 230C572 175 512 122 452 92C420 78 385 62 355 58C408 78 475 115 518 165C546 198 552 230 538 258C505 312 418 356 320 370C252 380 190 370 150 332C120 295 122 240 138 190C162 130 215 70 275 65Z"/>
            </g>
            <g transform="translate(220 800) scale(.3333)">
                <path d="M235 325C200 315 150 340 115 375C80 420 62 480 65 530C70 600 130 645 215 660C300 668 425 627 495 577C538 542 552 510 547 480C532 430 472 383 422 353C390 336 360 325 330 320C378 342 442 388 486 433C510 467 516 495 502 518C465 570 368 618 270 630C203 637 135 620 100 577C81 530 90 470 114 420C142 370 185 335 235 325Z"/>
            </g>
        </svg>
    </div>

    <script src="https://cdn.jsdelivr.net/npm/bootstrap@5.3.3/dist/js/bootstrap.bundle.min.js"></script>
</body>

</html>
